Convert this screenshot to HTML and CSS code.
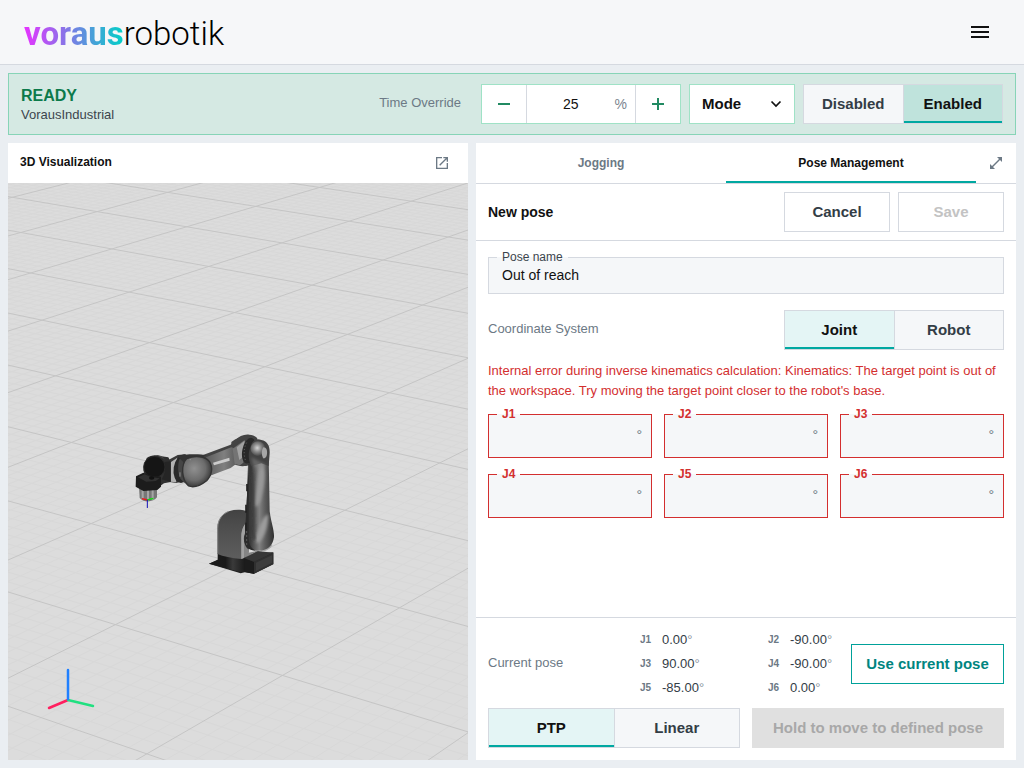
FILE: index.html
```html
<!DOCTYPE html>
<html lang="en">
<head>
<meta charset="utf-8">
<meta name="viewport" content="width=device-width, initial-scale=1">
<title>voraus robotik</title>
<link rel="stylesheet" href="styles.css">
</head>
<body>
<header class="topbar">
  <a class="logo" href="#"><span class="logo-bold">voraus</span><span class="logo-thin">robotik</span></a>
  <button class="icon-btn menu-btn" type="button" aria-label="Menu">
    <svg width="24" height="24" viewBox="0 0 24 24" fill="currentColor"><path d="M3 18h18v-2H3v2zm0-5h18v-2H3v2zm0-7v2h18V6H3z"/></svg>
  </button>
</header>

<section class="status">
  <div class="status-info">
    <strong class="status-state">READY</strong>
    <span class="status-name">VorausIndustrial</span>
  </div>
  <label class="muted" for="override">Time Override</label>
  <div class="stepper">
    <button class="step" type="button" aria-label="Decrease">
      <svg width="14" height="14" viewBox="0 0 14 14"><path d="M1 7h12" stroke="currentColor" stroke-width="2"/></svg>
    </button>
    <input class="step-value" id="override" type="text" value="25">
    <span class="step-unit">%</span>
    <button class="step" type="button" aria-label="Increase">
      <svg width="14" height="14" viewBox="0 0 14 14"><path d="M1 7h12M7 1v12" stroke="currentColor" stroke-width="2"/></svg>
    </button>
  </div>
  <div class="mode">
    <select class="mode-select" aria-label="Mode"><option>Mode</option></select>
    <svg class="mode-arrow" width="12" height="8" viewBox="0 0 12 8" fill="none"><path d="M1.500 1.500L6 6l4.500-4.500" stroke="currentColor" stroke-width="1.700"/></svg>
  </div>
  <div class="toggle toggle-status">
    <button class="toggle-btn" type="button" aria-pressed="false">Disabled</button>
    <button class="toggle-btn" type="button" aria-pressed="true">Enabled</button>
  </div>
</section>

<main class="workspace">
  <section class="panel">
    <div class="panel-head">
      <h2 class="panel-title">3D Visualization</h2>
      <button class="icon-btn" type="button" aria-label="Open in new window">
        <svg width="16" height="16" viewBox="0 0 24 24" fill="currentColor"><path d="M19 19H5V5h7V3H3v18h18v-9h-2v7zM14 3v2h3.600l-9.800 9.800 1.400 1.400L19 6.400V10h2V3h-7z"/></svg>
      </button>
    </div>
    <div class="scene">
      <svg class="scene-svg" viewBox="0 0 460 577" preserveAspectRatio="xMidYMid slice" role="img" aria-label="Robot arm on a floor grid">
        <defs>
          <linearGradient id="column" x1="0" x2="1" y1="0" y2="0">
            <stop offset="0" stop-color="#343434"/><stop offset=".2" stop-color="#3c3c3c"/><stop offset=".5" stop-color="#808080"/><stop offset=".7" stop-color="#5c5c5c"/><stop offset="1" stop-color="#303030"/>
          </linearGradient>
          <linearGradient id="beam" x1="0" x2="1" y1="0" y2="0">
            <stop offset="0" stop-color="#5c5c5c"/><stop offset=".6" stop-color="#808080"/><stop offset="1" stop-color="#5c5c5c"/>
          </linearGradient>
          <linearGradient id="foot" x1="0" x2="0" y1="0" y2="1">
            <stop offset="0" stop-color="#424242"/><stop offset=".3" stop-color="#4c4c4c"/><stop offset="1" stop-color="#5e5e5e"/>
          </linearGradient>
          <linearGradient id="plinth" x1="0" x2="1" y1="0" y2="0">
            <stop offset="0" stop-color="#1c1c1c"/><stop offset=".45" stop-color="#191919"/><stop offset=".65" stop-color="#3a3a3a"/><stop offset="1" stop-color="#181818"/>
          </linearGradient>
          <radialGradient id="elbow" cx=".4" cy=".4" r=".65">
            <stop offset="0" stop-color="#909090"/><stop offset=".6" stop-color="#6c6c6c"/><stop offset="1" stop-color="#303030"/>
          </radialGradient>
          <radialGradient id="cap" cx=".45" cy=".45" r=".6">
            <stop offset="0" stop-color="#d4d4d4"/><stop offset=".45" stop-color="#8a8a8a"/><stop offset="1" stop-color="#3c3c3c"/>
          </radialGradient>
          <filter id="soft" x="-50%" y="-50%" width="200%" height="200%"><feGaussianBlur stdDeviation="5"/></filter>
        </defs>
        <path id="grid-minor" class="grid-minor"/>
        <path id="grid-major" class="grid-major"/>
        <g transform="translate(112 237) scale(.33333)">
          <!-- base -->
          <path d="M267 431l26-12 110-18 57-4v36l-58 28-28-4-12 3z" fill="#202020"/>
          <path d="M267 431l26-11v-20l84 14v40l-16 2z" fill="url(#plinth)"/>
          <path d="M373 416l30 10-1 36-29-7z" fill="#1c1c1c"/>
          <path d="M370 413l42-20 48 5-57 28z" fill="#363636"/>
          <path d="M402 425l58-27v34l-58 29z" fill="#303030"/>
          <path d="M408 428l48-22v22l-48 25z" fill="#3d3d3d"/>
          <path d="M292 402V325c0-35 26-56 62-56 18 0 28 4 32 14v114l-22 20c-30-2-54-8-72-15z" fill="url(#foot)"/>
          <path d="M293 400V325c0-30 18-46 34-51" fill="none" stroke="#888" stroke-width="3"/>
          <path d="M364 417V350c0-22 8-38 22-48v96l30-6-30 15z" fill="#858585"/>
          <path d="M364 417V350c0-22 8-38 22-48v16c-9 10-14 22-14 40v56z" fill="#a1a1a1"/>
          <path d="M372 350c2-10 8-14 14-14v52c-8-4-16-20-14-38z" fill="#2e2e2e"/>
          <path d="M420 391l18-5c8-4 12-9 14-15l5 4c-4 10-14 16-28 20z" fill="#a5a5a5"/>
          <!-- forearm -->
          <path d="M247 106l85-32 12-12c14-14 28-20 44-18 12 1 20 5 24 11l-22 80c-20 6-35 4-48-3l-80 38-28 6z" fill="#434343"/>
          <path d="M258 112l76-30 14 4 0 46-16 12-70 26z" fill="url(#beam)"/>
          <path d="M279 128l49-15 1 9-47 14z" fill="#cbcbcb"/>
          <path d="M338 86l36-26-4 68-10 8-16-4z" fill="#747474"/>
          <path d="M350 82l24-20-6 50-10 8z" fill="#a2a2a2"/>
          <path d="M334 66c20-17 42-21 66-15l8 5c-24-6-44 0-60 13l-14 12z" fill="#444"/>
          <!-- upper arm -->
          <path d="M388 104l-5 90-4 66-5 104c2 15 14 26 36 28 30 2 48-12 52-40 1-23-8-40-13-78l-3-164c-18-24-46-26-58-6z" fill="url(#column)"/>
          <path d="M420 118c22 20 16 74 4 116-6 24-16 34-20 18z" fill="#999" filter="url(#soft)"/>
          <path d="M444 282c2 32-8 66-28 88-14-2-8-20-2-36 8-26 16-44 30-52z" fill="#9c9c9c" filter="url(#soft)"/>
          <path d="M386 130v206c-2 28 2 48 22 56-20 0-32-10-34-28l6-110 4-120z" fill="#2b2b2b"/>
          <path d="M396 162l4 142c0 20-4 36 4 56M398 160l-6-2V110" fill="none" stroke="#303030" stroke-width="6" filter="url(#soft)"/>
          <path d="M381 192v22M378 254v24M378 308v24" stroke="#202020" stroke-width="5"/>
          <path d="M380 334v46" stroke="#929292" stroke-width="2" stroke-dasharray="4 8"/>
          <!-- shoulder joint -->
          <ellipse cx="387" cy="92" rx="20" ry="39" transform="rotate(12 387 92)" fill="#292929"/>
          <path d="M380 68c-8 14-10 32-4 52" fill="none" stroke="#888" stroke-width="2" stroke-dasharray="3 7"/>
          <path d="M392 78c6-20 20-24 32-18 20 4 26 20 25 40l-3 38-22-8-30 8c-10-18-10-40-2-60z" fill="#424242"/>
          <circle cx="414" cy="86" r="22" fill="url(#cap)"/>
          <path d="M430 82c10 0 12 10 11 20-1 10-6 14-11 13-6-8-6-24 0-33z" fill="#a6a6a6"/>
          <path d="M394 112l5 24 18 14 22-16" fill="#888" opacity=".5" filter="url(#soft)"/>
          <!-- wrist -->
          <path d="M145 120l28-15 24-2v78l-28 8-20-3z" fill="#3a3a3a"/>
          <path d="M152 127l20-14-8 36 5 38-17-2z" fill="#b2b2b2"/>
          <ellipse cx="187" cy="146" rx="26" ry="43" transform="rotate(9 187 146)" fill="#292929"/>
          <path d="M178 118c-5 18-5 40 3 58l16 16c-12-20-12-60 0-78z" fill="#454545"/>
          <path d="M172 108c28-8 74-6 88-2l-32 16-36 6z" fill="#343434"/>
          <path d="M200 116c24-10 55-8 68 8 12 18 8 42-8 58-18 14-38 22-54 16-22-20-24-62-6-82z" fill="url(#elbow)" stroke="#333" stroke-width="4"/>
          <path d="M180 157v13M209 119h3" stroke="#bbb" stroke-width="2"/>
          <path d="M80 114c14-10 28-10 40-6l25 4 7 14v60l-20 4-28 20-20-10-14-50z" fill="#303030"/>
          <path d="M88 114c20-10 36-6 50 8l-14-14-12-3z" fill="#4b4b4b"/>
          <circle cx="103" cy="141" r="32" fill="#151515" stroke="#292929" stroke-width="3"/>
          <path d="M134 126c4 22 0 38-9 52l27 8v-62z" fill="#252525"/>
          <!-- tool -->
          <path d="M57 200l54 6v26c-10 14-38 18-52 2z" fill="#777"/>
          <path d="M68 206v30M84 208v34M98 208v31" stroke="#a5a5a5" stroke-width="6"/>
          <path d="M48 169l22-11 25 9 28 3v30l-11 10-42 3-23-13z" fill="#1c1c1c"/>
          <path d="M54 172l20-9 20 9 25 3-12 8-28 2z" fill="#303030"/>
          <ellipse cx="95" cy="174" rx="8" ry="5" fill="#111"/>
          <path d="M66 236l16 4" stroke="#f01818" stroke-width="4"/>
          <path d="M82 240l18-5" stroke="#12d912" stroke-width="4"/>
          <path d="M82 239v25" stroke="#1010b8" stroke-width="3"/>
        </g>
        <g fill="none" stroke-width="2.500" stroke-linecap="round">
          <path d="M60 517l-19 8" stroke="#ff1f5f"/>
          <path d="M60 517l25 6" stroke="#20e080"/>
          <path d="M60 516v-29" stroke="#2080ff"/>
        </g>
      </svg>
    </div>
  </section>

  <section class="panel">
    <nav class="tabs">
      <button class="tab" type="button">Jogging</button>
      <button class="tab tab-active" type="button">Pose Management</button>
      <button class="icon-btn expand" type="button" aria-label="Expand">
        <svg width="14" height="14" viewBox="0 0 14 14" fill="currentColor"><path d="M8 1h5v5l-2-2-7 7 2 2H1V8l2 2 7-7z"/></svg>
      </button>
    </nav>
    <div class="pose-head">
      <h1 class="pose-title">New pose</h1>
      <button class="btn" type="button">Cancel</button>
      <button class="btn" type="button" disabled>Save</button>
    </div>
    <form class="pose-form">
      <fieldset class="field">
        <legend><label for="pose-name">Pose name</label></legend>
        <input class="field-input" id="pose-name" type="text" value="Out of reach">
      </fieldset>
      <div class="coord">
        <span class="muted">Coordinate System</span>
        <div class="toggle toggle-coord">
          <button class="toggle-btn" type="button" aria-pressed="true">Joint</button>
          <button class="toggle-btn" type="button" aria-pressed="false">Robot</button>
        </div>
      </div>
      <p class="error">Internal error during inverse kinematics calculation: Kinematics: The target point is out of the workspace. Try moving the target point closer to the robot's base.</p>
      <div class="joints">
        <fieldset class="field field-error"><legend><label for="j1">J1</label></legend><input class="field-input" id="j1" type="text"><span class="unit">°</span></fieldset>
        <fieldset class="field field-error"><legend><label for="j2">J2</label></legend><input class="field-input" id="j2" type="text"><span class="unit">°</span></fieldset>
        <fieldset class="field field-error"><legend><label for="j3">J3</label></legend><input class="field-input" id="j3" type="text"><span class="unit">°</span></fieldset>
        <fieldset class="field field-error"><legend><label for="j4">J4</label></legend><input class="field-input" id="j4" type="text"><span class="unit">°</span></fieldset>
        <fieldset class="field field-error"><legend><label for="j5">J5</label></legend><input class="field-input" id="j5" type="text"><span class="unit">°</span></fieldset>
        <fieldset class="field field-error"><legend><label for="j6">J6</label></legend><input class="field-input" id="j6" type="text"><span class="unit">°</span></fieldset>
      </div>
    </form>
    <footer class="pose-foot">
      <div class="current">
        <span class="muted current-label">Current pose</span>
        <dl class="values">
          <div class="value"><dt>J1</dt><dd>0.00<span class="deg">°</span></dd></div>
          <div class="value"><dt>J2</dt><dd>-90.00<span class="deg">°</span></dd></div>
          <div class="value"><dt>J3</dt><dd>90.00<span class="deg">°</span></dd></div>
          <div class="value"><dt>J4</dt><dd>-90.00<span class="deg">°</span></dd></div>
          <div class="value"><dt>J5</dt><dd>-85.00<span class="deg">°</span></dd></div>
          <div class="value"><dt>J6</dt><dd>0.00<span class="deg">°</span></dd></div>
        </dl>
        <button class="btn btn-accent" type="button">Use current pose</button>
      </div>
      <div class="actions">
        <div class="toggle">
          <button class="toggle-btn" type="button" aria-pressed="true">PTP</button>
          <button class="toggle-btn" type="button" aria-pressed="false">Linear</button>
        </div>
        <button class="btn btn-hold" type="button" disabled>Hold to move to defined pose</button>
      </div>
    </footer>
  </section>
</main>
<script src="scene.js"></script>
</body>
</html>
```
FILE: styles.css
```css
* { box-sizing: border-box; }

body {
  margin: 0;
  min-height: 100vh;
  display: flex;
  flex-direction: column;
  background: #eaeef2;
  color: #111;
  font: 13px/20px "Liberation Sans", Arial, sans-serif;
}

button, input, select { font: inherit; color: inherit; }
button { cursor: pointer; padding: 0; border: 0; background: none; }
h1, h2, p, dl, dd { margin: 0; }

.muted { color: #6c7985; padding-bottom: 2px; }

.icon-btn {
  display: grid;
  place-items: center;
  width: 40px;
  height: 40px;
  color: #6c7985;
}

/* Top bar */
.topbar {
  display: flex;
  align-items: center;
  justify-content: space-between;
  height: 65px;
  padding: 0 24px;
  background: #f6f7f9;
  border-bottom: 1px solid #d5d9e0;
}
.logo {
  color: #000;
  font: 33px/48px Roboto, sans-serif;
  text-decoration: none;
  padding-top: 3px;
}
.logo-bold {
  font-weight: 700;
  color: transparent;
  background: linear-gradient(90deg, #e633ff, #00d1c7);
  background-clip: text;
  -webkit-background-clip: text;
}
.logo-thin { font-weight: 300; }
.menu-btn { color: #111; }

/* Status bar */
.status {
  display: flex;
  align-items: center;
  gap: 8px;
  margin: 8px;
  padding: 10px 12px;
  background: #d5e9e3;
  border: 1px solid #87d4b7;
}
.status-info { flex: 1; display: flex; flex-direction: column; padding-top: 2px; }
.status-state { color: #0c7a4b; font-size: 16px; }
.status-name { color: #3c454d; line-height: 18px; }
.stepper {
  display: flex;
  width: 200px;
  height: 40px;
  margin-left: 12px;
  background: #fff;
  border: 1px solid #9fe2c6;
}
.step { flex: none; width: 44px; display: grid; place-items: center; color: #218a62; }
.step-value {
  flex: 1;
  min-width: 0;
  padding: 0 0 0 8px;
  border: 0;
  border-left: 1px solid #d5d9e0;
  text-align: center;
  font-size: 14px;
}
.step-unit {
  padding: 0 8px;
  line-height: 38px;
  font-size: 14px;
  color: #7d868f;
  border-right: 1px solid #d5d9e0;
}
.mode { position: relative; width: 106px; }
.mode-select {
  appearance: none;
  width: 100%;
  height: 40px;
  padding: 0 12px;
  border: 1px solid #9fe2c6;
  border-radius: 0;
  background: #fff;
  font-size: 15px;
  font-weight: 700;
}
.mode-arrow { position: absolute; right: 13px; top: 16px; pointer-events: none; }

/* Two-way switches */
.toggle {
  display: flex;
  height: 40px;
  border: 1px solid #d5d9e0;
}
.toggle-status { width: 200px; }
.toggle-coord { width: 220px; }
.toggle-btn {
  flex: 1;
  background: #f5f7f9;
  color: #333d46;
  font-size: 15px;
  font-weight: 700;
}
.toggle-btn + .toggle-btn { border-left: 1px solid #d5d9e0; }
.toggle-btn[aria-pressed="true"] {
  background: #e4f5f5;
  color: #111;
  box-shadow: inset 0 -2px #00a8a1;
}
.toggle-status .toggle-btn[aria-pressed="true"] { background: #bfe3dc; }

/* Panels */
.workspace {
  flex: 1;
  display: grid;
  grid-template-columns: 23fr 27fr;
  gap: 8px;
  margin: 0 8px 8px;
}
.panel { display: flex; flex-direction: column; min-width: 0; background: #fff; }
.panel-head {
  display: flex;
  align-items: center;
  justify-content: space-between;
  height: 40px;
  padding: 0 6px 0 12px;
}
.panel-title { font-size: 12px; padding-bottom: 2px; }
.scene { position: relative; flex: 1; background: #dcdcdc; }
.scene-svg { position: absolute; inset: 0; width: 100%; height: 100%; }
.grid-minor { fill: none; stroke: #d8d8d8; stroke-width: 1; }
.grid-major { fill: none; stroke: #c5c5c5; stroke-width: 1; }

.tabs { display: flex; border-bottom: 1px solid #d5d9e0; }
.tab {
  flex: 1;
  height: 40px;
  font-size: 12px;
  font-weight: 700;
  color: #6c7985;
}
.tab-active { color: #111; box-shadow: inset 0 -2px #00a8a1; }

.pose-head {
  display: flex;
  align-items: center;
  gap: 8px;
  padding: 8px 12px;
  border-bottom: 1px solid #d5d9e0;
}
.pose-title { flex: 1; font-size: 14px; }
.btn {
  width: 106px;
  height: 40px;
  border: 1px solid #d5d9e0;
  background: #fff;
  color: #333d46;
  font-size: 15px;
  font-weight: 700;
}
.btn:disabled { color: #c3c3c3; }
.btn-accent { width: 153px; border-color: #00a19a; color: #008580; }
.btn-hold, .btn-hold:disabled { width: 100%; border: 0; background: #e0e0e0; color: #a8a8a8; }

.pose-form { flex: 1; padding: 9px 12px; }
.field {
  display: flex;
  min-width: 0;
  margin: 0;
  padding: 0 8px;
  border: 1px solid #d5d9e0;
  background: #f5f7f9;
}
.field legend {
  padding: 0 5px;
  line-height: 14px;
  font-size: 12px;
  color: #3c454d;
}
.field-input {
  flex: 1;
  min-width: 0;
  height: 29px;
  padding: 0 5px 8px;
  border: 0;
  background: transparent;
  font-size: 14px;
}
.coord {
  display: flex;
  align-items: center;
  justify-content: space-between;
  padding: 16px 0 11px;
}
.error { color: #d32f2f; }
.joints {
  display: grid;
  grid-template-columns: repeat(3, 1fr);
  gap: 9px 12px;
  padding-top: 6px;
}
.field-error { border-color: #d32f2f; }
.field-error legend { color: #d32f2f; font-weight: 700; }
.field-error .field-input { height: 36px; }
.unit { padding-right: 1px; line-height: 28px; font-size: 14px; color: #6c7985; }

.pose-foot { padding: 12px; border-top: 1px solid #d5d9e0; }
.current { display: flex; align-items: center; }
.current-label { width: 152px; }
.values {
  flex: 1;
  display: grid;
  grid-template-columns: 128px 1fr;
  row-gap: 4px;
}
.value { display: flex; color: #333d46; white-space: nowrap; }
.value dt { width: 22px; font-size: 10px; font-weight: 700; color: #6c7985; }
.deg { color: #8a949d; }
.actions {
  display: grid;
  grid-template-columns: 1fr 1fr;
  gap: 12px;
  padding-top: 10px;
}
```
FILE: scene.js
```js
// Floor grid in perspective. The corners are the projections of the
// floor rectangle x: -1..5, y: -4..3, in scene units.
const X0 = -1, Y0 = 3, W = 6, H = -7;
const [p0, p1, p2, p3] = [[178.7, 43.8], [853.2, 157.9], [274.5, 492.4], [-520.3, 250.7]];

const dx1 = p1[0] - p2[0], dx2 = p3[0] - p2[0], sx = p0[0] - p1[0] + p2[0] - p3[0];
const dy1 = p1[1] - p2[1], dy2 = p3[1] - p2[1], sy = p0[1] - p1[1] + p2[1] - p3[1];
const det = dx1 * dy2 - dx2 * dy1;
const g = (sx * dy2 - dx2 * sy) / det;
const h = (dx1 * sy - sx * dy1) / det;

function project(x, y) {
  const u = (x - X0) / W, v = (y - Y0) / H;
  const w = g * u + h * v + 1;
  const axis = i => ((p1[i] - p0[i] + g * p1[i]) * u + (p3[i] - p0[i] + h * p3[i]) * v + p0[i]) / w;
  return axis(0).toFixed(1) + " " + axis(1).toFixed(1);
}

function lines(step, skip) {
  let d = "";
  for (let i = -70; i <= 80; i += step) {
    if (skip && i % skip === 0) continue;
    const t = i / 10;
    d += `M${project(t, -7)}L${project(t, 8)}M${project(-7, t)}L${project(8, t)}`;
  }
  return d;
}

document.getElementById("grid-minor").setAttribute("d", lines(1, 10));
document.getElementById("grid-major").setAttribute("d", lines(10, 0));
```
